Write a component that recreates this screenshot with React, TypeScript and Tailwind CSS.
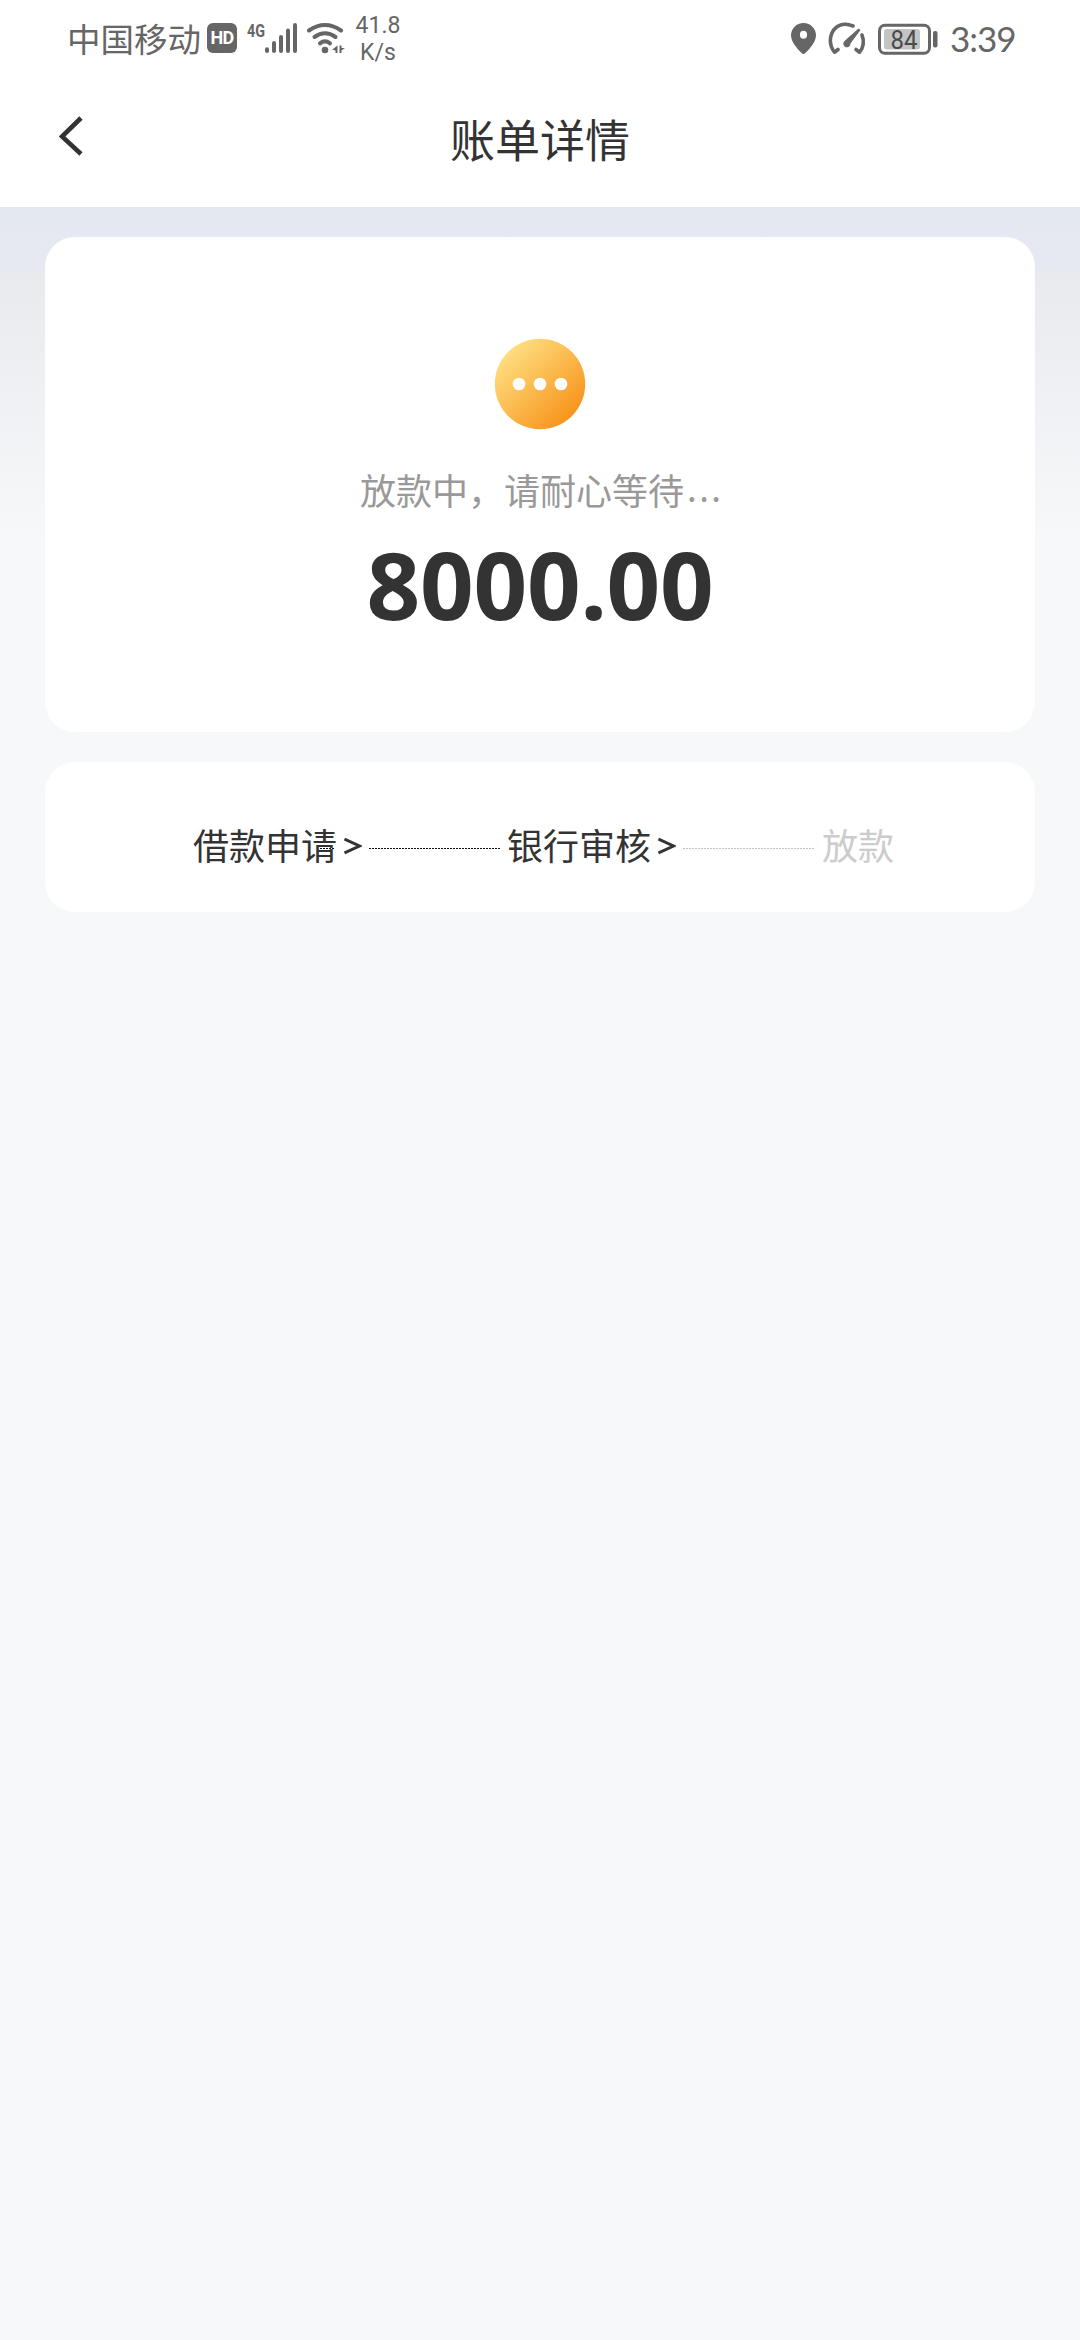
import React from "react";

function StatusBar() {
  return (
    <div className="flex h-[78px] items-center justify-between pl-[67px] pr-[66px] text-[#666666]">
      <div className="flex items-center">
        <span className="mb-[3px] text-[33.5px] leading-[48px]">中国移动</span>
        <span className="ml-[6px] mb-[2px] flex h-[30px] w-[30px] items-center justify-center rounded-[6px] bg-[#666666] font-['Roboto'] text-[18px] font-bold leading-none tracking-[-0.8px] text-white">
          HD
        </span>
        <svg className="ml-[9px] mb-[1px] h-[36px] w-[100px]" viewBox="246 20 100 36" fill="none">
          <text x="247" y="35.5" fill="#666666" fontFamily="Roboto" fontWeight="700" fontSize="18.5" textLength="18" lengthAdjust="spacingAndGlyphs">
            4G
          </text>
          <g stroke="#666666" strokeWidth="4" strokeLinecap="round">
            <path d="M267 48.2v1.8M274 42v8M281 36v14M288 29.5v20.5M295 24v26" />
          </g>
          <g stroke="#666666" strokeWidth="4" strokeLinecap="round">
            <path d="M309 29.5Q325 18.500 341 29.500" />
            <path d="M314.500 36Q325 28.500 335.500 36" />
            <path d="M320 42.300Q325 38.500 330 42.300" />
          </g>
          <circle cx="325" cy="49" r="3.3" fill="#666666" />
          <path d="M337.500 44.500v7.500h-2v-2.500l-3.500-.8zM339.500 44.500v7.500h2v-2.500l3.500-2.500h-3.500v-2.500z" fill="#666666" />
        </svg>
        <div className="ml-[9px] w-[46px] text-center font-['Roboto'] text-[23px] leading-[27px]">
          <div>41.8</div>
          <div>K/s</div>
        </div>
      </div>
      <div className="flex items-center">
        <svg className="mb-[1px] h-[36px] w-[150px]" viewBox="790 20 150 36" fill="none">
          <path
            fillRule="evenodd"
            d="M803.500 22C796.500 22 791 27.500 791 34.500C791 42 800 50.500 802.300 52.500Q803.500 53.500 804.700 52.500C807 50.500 816 42 816 34.500C816 27.500 810.500 22 803.500 22ZM803.500 29.800a3.600 4 0 1 1 0 8a3.600 4 0 1 1 0-8Z"
            fill="#666666"
          />
          <g stroke="#666666" strokeWidth="3.600" strokeLinecap="round" strokeLinejoin="round">
            <path d="M853 25C843 20.500 834.500 25 831.500 33C829.500 39 830.500 46 834.500 51.200L838 48.500" />
            <path d="M862 34C864.500 40 863.500 47 859.500 51.200L856 48.500" />
          </g>
          <path d="M858.500 27.500L860.500 29L850.500 42.500A3.600 3.600 0 1 1 844.800 39.800Z" fill="#666666" />
          <rect x="879.500" y="24.200" width="50" height="28" rx="5.500" stroke="#666666" strokeWidth="3" />
          <rect x="884" y="28" width="36" height="20.500" rx="3" fill="#c4c4c4" />
          <text x="904" y="47.500" fill="#4a4a4a" fontFamily="Roboto" fontSize="26" textAnchor="middle" textLength="27" lengthAdjust="spacingAndGlyphs">
            84
          </text>
          <rect x="933" y="30" width="4.500" height="16.500" rx="2" fill="#666666" />
        </svg>
        <span className="ml-[10px] mb-[2px] w-[64px] font-['Lato'] text-[35px] leading-[48px] tracking-[-1px]">3:39</span>
      </div>
    </div>
  );
}

function TitleBar() {
  return (
    <div className="grid h-[129px] grid-cols-[200px_1fr_200px] items-center">
      <svg className="ml-[59px] mb-[13px] h-[40px] w-[25px]" viewBox="0 0 25 40" fill="none" stroke="#333333" strokeWidth="4.600">
        <path d="M22 2L3 20.500L22 38" />
      </svg>
      <h1 className="mb-[8px] text-center text-[45px] leading-[66px] text-[#333333]">账单详情</h1>
    </div>
  );
}

function PendingIcon() {
  return (
    <svg className="h-[92px] w-[92px] shrink-0" viewBox="0 0 92 92">
      <defs>
        <linearGradient id="pending" x1="0.12" y1="0.12" x2="0.86" y2="0.88">
          <stop offset="0" stopColor="#ffe083" />
          <stop offset="1" stopColor="#f7931a" />
        </linearGradient>
      </defs>
      <circle cx="46" cy="46" r="45.200" fill="url(#pending)" />
      <g fill="#ffffff">
        <circle cx="25" cy="46" r="6.300" />
        <circle cx="46" cy="46" r="6.300" />
        <circle cx="67" cy="46" r="6.300" />
      </g>
    </svg>
  );
}

function Chevron() {
  return (
    <svg className="ml-[7px] mt-[3px] h-[20px] w-[18px]" viewBox="0 0 18 20" fill="none" stroke="#333333" strokeWidth="3">
      <path d="M0.500 3L15.500 10L0.500 17" />
    </svg>
  );
}

export default function App() {
  return (
    <div className="min-h-[2340px] w-[1080px] bg-[#f7f8fa] font-['Noto_Sans_CJK_SC',sans-serif]">
      <header className="bg-white">
        <StatusBar />
        <TitleBar />
      </header>
      <main className="flex flex-col gap-[30px] bg-[linear-gradient(180deg,#e4e8f0_0px,#e6e9f2_58px,#e8eaee_66px,#f7f8fa_330px)] px-[45px] pt-[30px]">
        <section className="flex h-[495px] flex-col items-center rounded-[30px] bg-white pt-[101px]">
          <PendingIcon />
          <p className="mt-[33px] flex text-[36px] leading-[52px] text-[#999999]">
            放款中，请耐心等待
            <span className="w-[36px] pl-[3px] font-['Noto_Sans'] tracking-[2.500px]">...</span>
          </p>
          <p className="mt-[19px] font-['Noto_Sans'] text-[94px] font-bold leading-[100px] tracking-[-0.300px] text-[#333333]">8000.00</p>
        </section>
        <section className="flex h-[150px] items-center rounded-[30px] bg-white pl-[148px] pt-[14px] text-[36px] leading-[52px] text-[#333333]">
          <span className="relative">
            借款申请
            <span className="absolute right-[2px] top-[30px] h-px w-[15px] bg-[repeating-linear-gradient(90deg,#111111_0_2px,#ffffff_2px_3px)]" />
          </span>
          <Chevron />
          <span className="ml-[7px] mr-[6px] mt-[9px] h-px w-[132px] bg-[repeating-linear-gradient(90deg,#111111_0_2px,#ffffff_2px_3px)]" />
          <span>银行审核</span>
          <Chevron />
          <span className="ml-[7px] mr-[7px] mt-[9px] h-px w-[132px] bg-[repeating-linear-gradient(90deg,#c4c4c4_0_2px,#ffffff_2px_3px)]" />
          <span className="text-[#cccccc]">放款</span>
        </section>
      </main>
    </div>
  );
}
